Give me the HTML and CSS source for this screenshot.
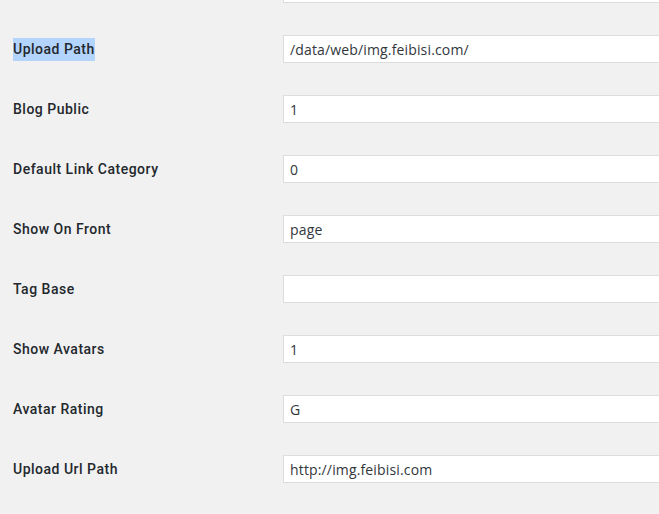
FILE: index.html
```html
<!DOCTYPE html>
<html lang="en">
<head>
    <meta charset="UTF-8">
    <meta name="viewport" content="width=device-width, initial-scale=1.0">
    <title>All Settings</title>
    <link rel="stylesheet" href="styles.css">
</head>
<body>

    <div class="form-table">
        <div class="row">
            <div class="label"></div>
            <div class="field"><input type="text" value=""></div>
        </div>
        <div class="row">
            <div class="label"><span class="selected">Upload Path</span></div>
            <div class="field"><input type="text" value="/data/web/img.feibisi.com/"></div>
        </div>
        <div class="row">
            <div class="label">Blog Public</div>
            <div class="field"><input type="text" value="1"></div>
        </div>
        <div class="row">
            <div class="label">Default Link Category</div>
            <div class="field"><input type="text" value="0"></div>
        </div>
        <div class="row">
            <div class="label">Show On Front</div>
            <div class="field"><input type="text" value="page"></div>
        </div>
        <div class="row">
            <div class="label">Tag Base</div>
            <div class="field"><input type="text" value=""></div>
        </div>
        <div class="row">
            <div class="label">Show Avatars</div>
            <div class="field"><input type="text" value="1"></div>
        </div>
        <div class="row">
            <div class="label">Avatar Rating</div>
            <div class="field"><input type="text" value="G"></div>
        </div>
        <div class="row">
            <div class="label">Upload Url Path</div>
            <div class="field"><input type="text" value="http://img.feibisi.com"></div>
        </div>
    </div>

</body>
</html>
```

FILE: styles.css
```css
body {
    font-family: 'Roboto', 'Liberation Sans', sans-serif;
    margin: 0;
    background: #f1f1f1;
    overflow: hidden;
}
.form-table {
    margin-top: -40px;
    padding-left: 13px;
}
.row {
    display: grid;
    grid-template-columns: 270px 1fr;
    height: 60px;
    align-items: center;
    padding-top: 15px;
    padding-bottom: 17px;
    box-sizing: border-box;
}
.label {
    font-size: 14px;
    font-weight: 500;
    color: #23282d;
    letter-spacing: 0.5px;
}
.selected {
    background: #b3d4fc;
    padding: 3px 0 4px;
}
.field {
    height: 28px;
}
input {
    width: 420px;
    height: 28px;
    box-sizing: border-box;
    margin: 0;
    padding: 0 6px;
    border: 1px solid #dddddd;
    background: white;
    font-family: 'Open Sans', 'Liberation Sans', sans-serif;
    font-size: 14px;
    letter-spacing: 0.15px;
    color: #32373c;
    outline: none;
}
```
